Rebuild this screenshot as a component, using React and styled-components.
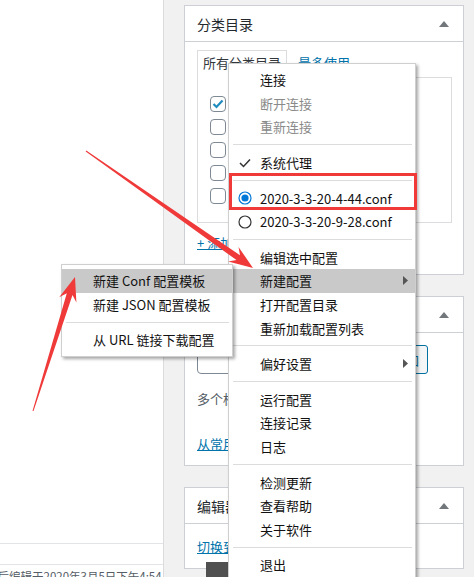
import React from 'react';
import styled, { createGlobalStyle } from 'styled-components';

const GlobalStyle = createGlobalStyle`
  html, body {
    margin: 0;
    padding: 0;
    background: #f1f1f1;
  }
  * {
    box-sizing: border-box;
  }
`;

const FONT = `"Noto Sans CJK SC", "Noto Sans", "Liberation Sans", sans-serif`;

const Page = styled.div`
  position: relative;
  display: flex;
  width: 474px;
  height: 577px;
  overflow: hidden;
  background: #f1f1f1;
  font-family: ${FONT};
  font-size: 13px;
  color: #32373c;
`;

/* left editor area */
const EditorPane = styled.div`
  width: 164px;
  flex-shrink: 0;
  display: flex;
  flex-direction: column;
  background: #fff;
  border-right: 1px solid #dcdcde;
  overflow: hidden;
`;

const EditorCanvas = styled.div`
  height: 543px;
  flex-shrink: 0;
`;

const StatusDivider = styled.div`
  height: 22px;
  flex-shrink: 0;
  border-top: 1px solid #e2e4e7;
  border-bottom: 1px solid #e2e4e7;
`;

const StatusText = styled.div`
  margin-left: -14px;
  padding-top: 2px;
  line-height: 18px;
  font-size: 11.5px;
  color: #555d66;
  white-space: nowrap;
`;

/* right sidebar */
const Sidebar = styled.div`
  display: flex;
  flex-direction: column;
  gap: 21px;
  width: 300px;
  padding: 5px 0 0 20px;
`;

const Postbox = styled.div`
  width: 280px;
  height: ${p => p.$height}px;
  flex-shrink: 0;
  background: #fff;
  border: 1px solid #ccd0d4;
  display: flex;
  flex-direction: column;
`;

const PostboxHeader = styled.div`
  height: 36px;
  flex-shrink: 0;
  display: flex;
  align-items: center;
  justify-content: space-between;
  padding: 0 14px 0 12px;
  border-bottom: 1px solid #ccd0d4;
  font-size: 14px;
  color: #23282d;
`;

const Toggle = styled.span`
  width: 0;
  height: 0;
  border-left: 5px solid transparent;
  border-right: 5px solid transparent;
  border-bottom: 6px solid #72777c;
`;

const PostboxBody = styled.div`
  padding: ${p => p.$pad || '8px 12px 0'};
  display: flex;
  flex-direction: column;
  align-items: flex-start;
`;

const Tabs = styled.div`
  display: flex;
  align-items: flex-end;
  gap: 5px;
`;

const Tab = styled.div`
  height: 28px;
  padding: 0 5px;
  line-height: 24px;
  color: ${p => (p.$active ? '#32373c' : '#0073aa')};
  background: ${p => (p.$active ? '#fff' : 'transparent')};
  border: ${p => (p.$active ? '1px solid #dcdcde' : '1px solid transparent')};
  border-bottom: none;
  margin-bottom: -1px;
  position: relative;
  z-index: 1;
`;

const TabPanel = styled.div`
  width: 255px;
  height: 146px;
  border: 1px solid #dcdcde;
  padding: 18px 12px 0;
  display: flex;
  flex-direction: column;
  gap: 7px;
`;

const CheckRow = styled.label`
  display: flex;
  align-items: center;
  gap: 8px;
  height: 16px;
`;

const Checkbox = styled.span`
  width: 16px;
  height: 16px;
  border: 1px solid #7e8993;
  border-radius: 4px;
  background: #fff;
  display: flex;
  align-items: center;
  justify-content: center;
`;

const Link = styled.a`
  color: #0073aa;
  text-decoration: underline;
  line-height: 18px;
  margin-top: ${p => p.$mt || 0}px;
`;

const TagInputRow = styled.div`
  display: flex;
  gap: 4px;
  width: 231px;
`;

const TagInput = styled.div`
  flex: 1;
  height: 29px;
  border: 1px solid #7e8993;
  border-radius: 4px;
`;

const TagButton = styled.div`
  width: 44px;
  height: 29px;
  border: 1px solid #0071a1;
  border-radius: 3px;
  color: #0071a1;
  background: #f3f5f6;
  display: flex;
  align-items: center;
  justify-content: center;
`;

const HelpText = styled.p`
  margin: 16px 0 0;
  line-height: 18px;
  color: #555d66;
  white-space: nowrap;
`;

const Tooltip = styled.div`
  position: absolute;
  left: 206px;
  top: 562px;
  width: 40px;
  height: 20px;
  background: #505050;
`;

/* context menu */
const Menu = styled.div`
  position: absolute;
  z-index: 10;
  left: ${p => p.$left}px;
  top: ${p => p.$top}px;
  width: ${p => p.$width}px;
  padding: 4px 0;
  background: #fff;
  border: 1px solid #cfcfcf;
  box-shadow: 2px 2px 3px rgba(0, 0, 0, 0.35);
  font-family: ${FONT};
  font-size: 13px;
`;

const MenuItem = styled.div`
  display: grid;
  grid-template-columns: 31px 1fr 20px;
  align-items: center;
  height: 23.6px;
  color: ${p => (p.$disabled ? '#8a8a8a' : '#111')};
  background: ${p => (p.$active ? '#c9c9c9' : 'transparent')};
  white-space: nowrap;
`;

const Gutter = styled.span`
  display: flex;
  align-items: center;
  justify-content: center;
`;

const Separator = styled.div`
  height: 12px;
  display: flex;
  align-items: center;
  padding: 0 3px 0 4px;

  &::after {
    content: '';
    flex: 1;
    height: 1px;
    background: #dcdcdc;
  }
`;

const Highlight = styled.div`
  position: absolute;
  z-index: 20;
  left: 229px;
  top: 173px;
  width: 188px;
  height: 37px;
  border: 3px solid #f03a3a;
`;

const Annotations = styled.svg`
  position: absolute;
  z-index: 30;
  left: 0;
  top: 0;
  pointer-events: none;
`;

const CheckIcon = () => (
  <svg width="12" height="10" viewBox="0 0 12 10">
    <polyline points="1,5 4.5,8.5 11,1.5" fill="none" stroke="#333" strokeWidth="1.5" />
  </svg>
);

const Radio = ({ on }) => (
  <svg width="14" height="14" viewBox="0 0 14 14">
    <circle cx="7" cy="7" r="6" fill="#fff" stroke={on ? '#0078d7' : '#333'} strokeWidth="1.2" />
    {on && <circle cx="7" cy="7" r="3.6" fill="#0078d7" />}
  </svg>
);

const SubArrow = () => (
  <svg width="5" height="9" viewBox="0 0 5 9">
    <polygon points="0,0 5,4.5 0,9" fill="#555" />
  </svg>
);

const BoxCheck = () => (
  <svg width="12" height="10" viewBox="0 0 12 10">
    <polyline points="1.5,5 4.5,8 10.5,1.5" fill="none" stroke="#1e8cbe" strokeWidth="2.2" />
  </svg>
);

function arrowPoints(x1, y1, x2, y2) {
  const dx = x2 - x1;
  const dy = y2 - y1;
  const len = Math.hypot(dx, dy);
  const ux = dx / len;
  const uy = dy / len;
  const nx = -uy;
  const ny = ux;
  const at = (d, w) => [x2 - ux * d + nx * w, y2 - uy * d + ny * w];
  const pts = [
    [x1 + nx * 0.5, y1 + ny * 0.5],
    at(18, 3),
    at(24, 9),
    [x2, y2],
    at(24, -9),
    at(18, -3),
    [x1 - nx * 0.5, y1 - ny * 0.5],
  ];
  return pts.map(p => p.map(v => v.toFixed(1)).join(',')).join(' ');
}

const mainMenu = [
  { label: '连接' },
  { label: '断开连接', disabled: true },
  { label: '重新连接', disabled: true },
  'sep',
  { label: '系统代理', icon: 'check' },
  'sep',
  { label: '2020-3-3-20-4-44.conf', icon: 'radio-on' },
  { label: '2020-3-3-20-9-28.conf', icon: 'radio' },
  'sep',
  { label: '编辑选中配置' },
  { label: '新建配置', sub: true, active: true },
  { label: '打开配置目录' },
  { label: '重新加载配置列表' },
  'sep',
  { label: '偏好设置', sub: true },
  'sep',
  { label: '运行配置' },
  { label: '连接记录' },
  { label: '日志' },
  'sep',
  { label: '检测更新' },
  { label: '查看帮助' },
  { label: '关于软件' },
  'sep',
  { label: '退出' },
];

const subMenu = [
  { label: '新建 Conf 配置模板', active: true },
  { label: '新建 JSON 配置模板' },
  'sep',
  { label: '从 URL 链接下载配置' },
];

const renderIcon = icon => {
  if (icon === 'check') return <CheckIcon />;
  if (icon === 'radio-on') return <Radio on />;
  if (icon === 'radio') return <Radio />;
  return null;
};

const MenuList = ({ items }) =>
  items.map((it, i) =>
    it === 'sep' ? (
      <Separator key={i} />
    ) : (
      <MenuItem key={i} $disabled={it.disabled} $active={it.active}>
        <Gutter>{renderIcon(it.icon)}</Gutter>
        <span>{it.label}</span>
        <Gutter>{it.sub && <SubArrow />}</Gutter>
      </MenuItem>
    )
  );

export default function App() {
  return (
    <>
      <GlobalStyle />
      <Page>
        <EditorPane>
          <EditorCanvas />
          <StatusDivider />
          <StatusText>最后编辑于2020年3月5日下午4:54</StatusText>
        </EditorPane>

        <Sidebar>
          <Postbox $height={270}>
            <PostboxHeader>
              分类目录
              <Toggle />
            </PostboxHeader>
            <PostboxBody>
              <Tabs>
                <Tab $active>所有分类目录</Tab>
                <Tab>最多使用</Tab>
              </Tabs>
              <TabPanel>
                <CheckRow>
                  <Checkbox>
                    <BoxCheck />
                  </Checkbox>
                  技术
                </CheckRow>
                <CheckRow>
                  <Checkbox />
                  生活
                </CheckRow>
                <CheckRow>
                  <Checkbox />
                  随笔
                </CheckRow>
                <CheckRow>
                  <Checkbox />
                  教程
                </CheckRow>
                <CheckRow>
                  <Checkbox />
                  未分类
                </CheckRow>
              </TabPanel>
              <Link $mt={11}>+ 添加新分类目录</Link>
            </PostboxBody>
          </Postbox>

          <Postbox $height={170}>
            <PostboxHeader>
              标签
              <Toggle />
            </PostboxHeader>
            <PostboxBody $pad="12px 12px 0">
              <TagInputRow>
                <TagInput />
                <TagButton>添加</TagButton>
              </TagInputRow>
              <HelpText>多个标签请用英文逗号（,）分开</HelpText>
              <Link $mt={27}>从常用标签中选择</Link>
            </PostboxBody>
          </Postbox>

          <Postbox $height={82}>
            <PostboxHeader>
              编辑器
              <Toggle />
            </PostboxHeader>
            <PostboxBody $pad="14px 12px 0">
              <Link>切换到经典编辑器</Link>
            </PostboxBody>
          </Postbox>
        </Sidebar>

        <Tooltip />

        <Menu $left={228} $top={63} $width={188}>
          <MenuList items={mainMenu} />
        </Menu>

        <Menu $left={61} $top={264} $width={172}>
          <MenuList items={subMenu} />
        </Menu>

        <Highlight />

        <Annotations width="474" height="577" viewBox="0 0 474 577">
          <polygon points={arrowPoints(86, 151, 253, 268)} fill="#f03a3a" />
          <polygon points={arrowPoints(33, 411, 75, 277)} fill="#f03a3a" />
        </Annotations>
      </Page>
    </>
  );
}
